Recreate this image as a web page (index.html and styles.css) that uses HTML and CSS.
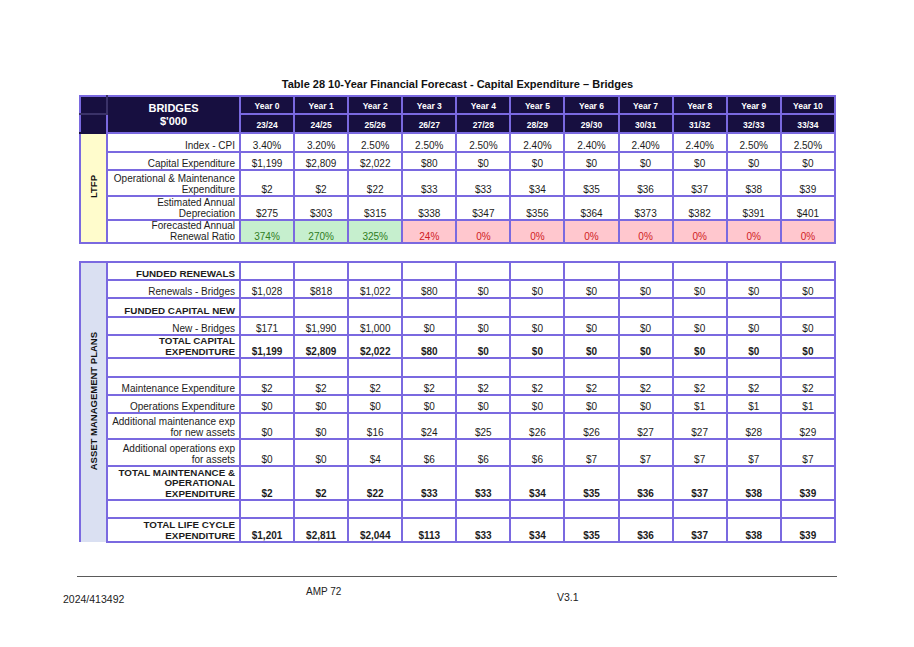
FILE: index.html
```html
<!DOCTYPE html>
<html lang="en">
<head>
<meta charset="utf-8">
<title>Capital Expenditure – Bridges</title>
<link rel="stylesheet" href="styles.css">
</head>
<body>
<div class="page">
  <h1 class="title">Table 28 10-Year Financial Forecast - Capital Expenditure – Bridges</h1>

  <table class="fin">
    <colgroup><col class="c-side"><col class="c-label"><col span="11"></colgroup>
    <tr class="h18 head">
      <td class="side-head side-head-top"></td>
      <th class="head-label" rowspan="2">BRIDGES<br>$'000</th>
      <th>Year 0</th><th>Year 1</th><th>Year 2</th><th>Year 3</th><th>Year 4</th><th>Year 5</th><th>Year 6</th><th>Year 7</th><th>Year 8</th><th>Year 9</th><th>Year 10</th>
    </tr>
    <tr class="h19 head">
      <td class="side-head"></td>
      <th>23/24</th><th>24/25</th><th>25/26</th><th>26/27</th><th>27/28</th><th>28/29</th><th>29/30</th><th>30/31</th><th>31/32</th><th>32/33</th><th>33/34</th>
    </tr>
    <tr class="h19">
      <td class="side ltfp" rowspan="5"><span class="vert">LTFP</span></td>
      <td class="label">Index - CPI</td>
      <td>3.40%</td><td>3.20%</td><td>2.50%</td><td>2.50%</td><td>2.50%</td><td>2.40%</td><td>2.40%</td><td>2.40%</td><td>2.40%</td><td>2.50%</td><td>2.50%</td>
    </tr>
    <tr class="h18">
      <td class="label">Capital Expenditure</td>
      <td>$1,199</td><td>$2,809</td><td>$2,022</td><td>$80</td><td>$0</td><td>$0</td><td>$0</td><td>$0</td><td>$0</td><td>$0</td><td>$0</td>
    </tr>
    <tr class="h26">
      <td class="label">Operational &amp; Maintenance<br>Expenditure</td>
      <td>$2</td><td>$2</td><td>$22</td><td>$33</td><td>$33</td><td>$34</td><td>$35</td><td>$36</td><td>$37</td><td>$38</td><td>$39</td>
    </tr>
    <tr class="h24">
      <td class="label">Estimated Annual<br>Depreciation</td>
      <td>$275</td><td>$303</td><td>$315</td><td>$338</td><td>$347</td><td>$356</td><td>$364</td><td>$373</td><td>$382</td><td>$391</td><td>$401</td>
    </tr>
    <tr class="h23">
      <td class="label">Forecasted Annual<br>Renewal Ratio</td>
      <td class="good">374%</td><td class="good">270%</td><td class="good">325%</td><td class="bad">24%</td><td class="bad">0%</td><td class="bad">0%</td><td class="bad">0%</td><td class="bad">0%</td><td class="bad">0%</td><td class="bad">0%</td><td class="bad">0%</td>
    </tr>
  </table>

  <table class="fin plans">
    <colgroup><col class="c-side"><col class="c-label"><col span="11"></colgroup>
    <tr class="h18">
      <td class="side amp" rowspan="13"><span class="vert">ASSET MANAGEMENT PLANS</span></td>
      <td class="label strong">FUNDED RENEWALS</td>
      <td></td><td></td><td></td><td></td><td></td><td></td><td></td><td></td><td></td><td></td><td></td>
    </tr>
    <tr class="h18">
      <td class="label">Renewals - Bridges</td>
      <td>$1,028</td><td>$818</td><td>$1,022</td><td>$80</td><td>$0</td><td>$0</td><td>$0</td><td>$0</td><td>$0</td><td>$0</td><td>$0</td>
    </tr>
    <tr class="h19">
      <td class="label strong">FUNDED CAPITAL NEW</td>
      <td></td><td></td><td></td><td></td><td></td><td></td><td></td><td></td><td></td><td></td><td></td>
    </tr>
    <tr class="h18">
      <td class="label">New - Bridges</td>
      <td>$171</td><td>$1,990</td><td>$1,000</td><td>$0</td><td>$0</td><td>$0</td><td>$0</td><td>$0</td><td>$0</td><td>$0</td><td>$0</td>
    </tr>
    <tr class="h23 total">
      <td class="label strong">TOTAL CAPITAL<br>EXPENDITURE</td>
      <td>$1,199</td><td>$2,809</td><td>$2,022</td><td>$80</td><td>$0</td><td>$0</td><td>$0</td><td>$0</td><td>$0</td><td>$0</td><td>$0</td>
    </tr>
    <tr class="h19">
      <td class="label"></td>
      <td></td><td></td><td></td><td></td><td></td><td></td><td></td><td></td><td></td><td></td><td></td>
    </tr>
    <tr class="h18">
      <td class="label">Maintenance Expenditure</td>
      <td>$2</td><td>$2</td><td>$2</td><td>$2</td><td>$2</td><td>$2</td><td>$2</td><td>$2</td><td>$2</td><td>$2</td><td>$2</td>
    </tr>
    <tr class="h18">
      <td class="label">Operations Expenditure</td>
      <td>$0</td><td>$0</td><td>$0</td><td>$0</td><td>$0</td><td>$0</td><td>$0</td><td>$0</td><td>$1</td><td>$1</td><td>$1</td>
    </tr>
    <tr class="h26">
      <td class="label">Additional maintenance exp<br>for new assets</td>
      <td>$0</td><td>$0</td><td>$16</td><td>$24</td><td>$25</td><td>$26</td><td>$26</td><td>$27</td><td>$27</td><td>$28</td><td>$29</td>
    </tr>
    <tr class="h27">
      <td class="label">Additional operations exp<br>for assets</td>
      <td>$0</td><td>$0</td><td>$4</td><td>$6</td><td>$6</td><td>$6</td><td>$7</td><td>$7</td><td>$7</td><td>$7</td><td>$7</td>
    </tr>
    <tr class="h34 total">
      <td class="label strong">TOTAL MAINTENANCE &amp;<br>OPERATIONAL<br>EXPENDITURE</td>
      <td>$2</td><td>$2</td><td>$22</td><td>$33</td><td>$33</td><td>$34</td><td>$35</td><td>$36</td><td>$37</td><td>$38</td><td>$39</td>
    </tr>
    <tr class="h18">
      <td class="label"></td>
      <td></td><td></td><td></td><td></td><td></td><td></td><td></td><td></td><td></td><td></td><td></td>
    </tr>
    <tr class="h24 total">
      <td class="label strong">TOTAL LIFE CYCLE<br>EXPENDITURE</td>
      <td>$1,201</td><td>$2,811</td><td>$2,044</td><td>$113</td><td>$33</td><td>$34</td><td>$35</td><td>$36</td><td>$37</td><td>$38</td><td>$39</td>
    </tr>
  </table>
</div>

<footer class="footer">
  <div class="rule"></div>
  <div class="foot-row">
    <span class="doc-no">2024/413492</span>
    <span class="page-no">AMP 72</span>
    <span class="version">V3.1</span>
  </div>
</footer>
</body>
</html>
```

FILE: styles.css
```css
html, body {
  margin: 0;
  padding: 0;
  background: #ffffff;
}

body {
  width: 914px;
  height: 647px;
  overflow: hidden;
  font-family: "Liberation Sans", Arial, sans-serif;
  color: #1c1c1c;
}

.page {
  padding: 78px 0 0 79px;
}

.title {
  margin: 0 0 4px 0;
  width: 757px;
  text-align: center;
  font-size: 11px;
  line-height: 13px;
  font-weight: bold;
  color: #111;
}

.fin {
  border-collapse: collapse;
  table-layout: fixed;
  width: 757px;
  font-size: 10px;
}

.fin.plans {
  margin-top: 17px;
}

.c-side { width: 27px; }
.c-label { width: 133px; }

.fin td,
.fin th {
  border: 2px solid #7a69e0;
  padding: 0 3px 0 3px;
  text-align: center;
  vertical-align: bottom;
  line-height: 10.5px;
  white-space: nowrap;
  overflow: hidden;
}

.h18 { height: 18px; }
.h19 { height: 19px; }
.h23 { height: 23px; }
.h24 { height: 24px; }
.h26 { height: 26px; }
.h27 { height: 27px; }
.h34 { height: 34px; }

/* header */
.head th {
  background: #170f40;
  color: #ffffff;
  font-size: 8.5px;
  font-weight: bold;
  padding-bottom: 2px;
}

.fin .head-label {
  font-size: 11px;
  line-height: 13px;
  vertical-align: middle;
  padding: 0;
}

.fin .side-head {
  background: #170f40;
  border-right-color: #3a3268;
  border-bottom-color: #170f40;
}

.fin .side-head-top {
  border-bottom: 2px solid #3a3268;
}

/* side columns */
.fin .side {
  padding: 0;
  vertical-align: middle;
  font-weight: bold;
  font-size: 9.5px;
  color: #111;
}

.ltfp { background: #fffccc; }
.fin .amp { background: #dae0f2; border-bottom: none; }

.vert {
  display: inline-block;
  writing-mode: vertical-rl;
  transform: rotate(180deg);
  line-height: 12px;
}

/* labels */
.fin .label {
  text-align: right;
  padding-right: 4px;
}

.fin .strong {
  font-weight: bold;
  font-size: 9.8px;
}

.total td {
  font-weight: bold;
}

.fin .good {
  background: #c6efce;
  color: #2f7d23;
}

.fin .bad {
  background: #ffc7ce;
  color: #d01c24;
}

/* footer */
.footer {
  padding: 33px 0 0 0;
}

.rule {
  margin-left: 77px;
  width: 760px;
  height: 1px;
  background: #5a5a5a;
}

.foot-row {
  display: flex;
  align-items: flex-start;
  padding-left: 63px;
  font-size: 10.5px;
  color: #222;
}

.doc-no {
  margin-top: 16px;
  width: 243px;
}

.page-no {
  margin-top: 9px;
  width: 251px;
  font-size: 10px;
}

.version {
  margin-top: 14px;
}
```
